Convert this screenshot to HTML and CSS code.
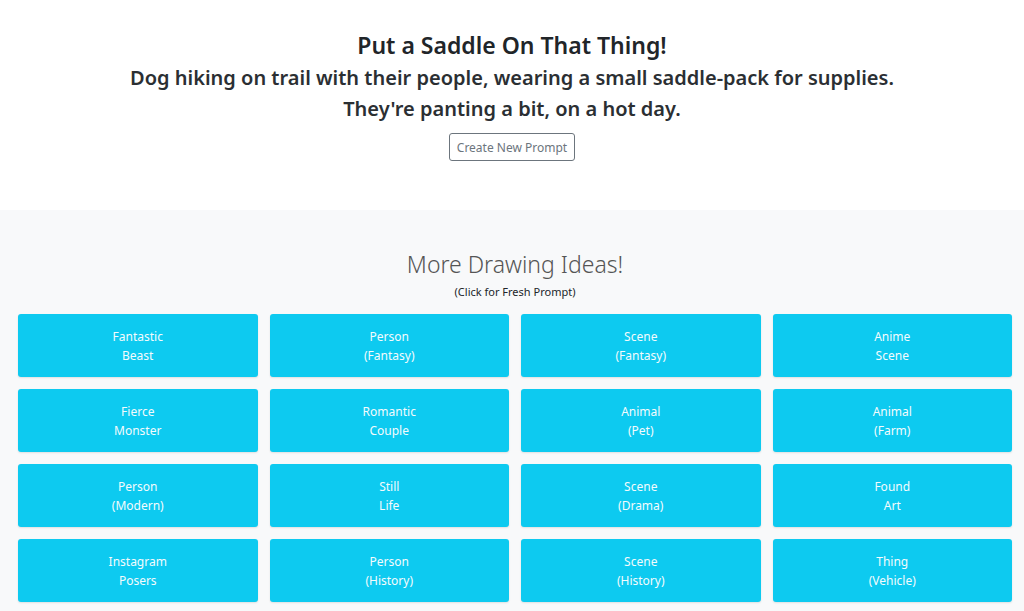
FILE: index.html
```html
<!DOCTYPE html>
<html>
<head>
	<title>Drawing Prompts</title>
	<link rel="stylesheet" href="styles.css">
</head>
<body>
	<div class="prompt">
		<h1>Put a Saddle On That Thing!</h1>
		<p class="desc">Dog hiking on trail with their people, wearing a small saddle-pack for supplies.<br>They're panting a bit, on a hot day.</p>
		<button class="btn-new">Create New Prompt</button>
	</div>

	<div class="ideas">
		<h2>More Drawing Ideas!</h2>
		<p class="hint">(Click for Fresh Prompt)</p>
		<div class="grid">
			<a class="card">Fantastic<br>Beast</a>
			<a class="card">Person<br>(Fantasy)</a>
			<a class="card">Scene<br>(Fantasy)</a>
			<a class="card">Anime<br>Scene</a>
			<a class="card">Fierce<br>Monster</a>
			<a class="card">Romantic<br>Couple</a>
			<a class="card">Animal<br>(Pet)</a>
			<a class="card">Animal<br>(Farm)</a>
			<a class="card">Person<br>(Modern)</a>
			<a class="card">Still<br>Life</a>
			<a class="card">Scene<br>(Drama)</a>
			<a class="card">Found<br>Art</a>
			<a class="card">Instagram<br>Posers</a>
			<a class="card">Person<br>(History)</a>
			<a class="card">Scene<br>(History)</a>
			<a class="card">Thing<br>(Vehicle)</a>
		</div>
	</div>
</body>
</html>
```

FILE: styles.css
```css
body{
	margin: 0;
	font-family: "Noto Sans", "Open Sans", sans-serif;
	color: #212529;
	background: #f8f9fa;
}
.prompt{
	background: #fff;
	text-align: center;
	padding-top: 28px;
	height: 210px;
	box-sizing: border-box;
}
.prompt h1{
	font-size: 23px;
	font-weight: 600;
	margin: 0;
	line-height: 34px;
}
.desc{
	font-size: 20px;
	font-weight: 600;
	line-height: 31px;
	margin: 0 0 9px;
	color: #2b2f33;
}
.btn-new{
	font-family: inherit;
	font-size: 12px;
	color: #6c757d;
	background: #fff;
	border: 1px solid #6c757d;
	border-radius: 3px;
	padding: 4px 7px;
	height: 28px;
}
.ideas{
	text-align: center;
	padding: 37px 12px 8px 18px;
}
.ideas h2{
	font-size: 23px;
	font-weight: 300;
	color: #555;
	margin: 0;
	line-height: 34px;
}
.hint{
	font-size: 11px;
	margin: 3px 0 15px;
}
.grid{
	display: grid;
	grid-template-columns: repeat(4, 1fr);
	gap: 12px;
}
.card{
	display: block;
	background: #0dcaf0;
	color: #f4fbfd;
	font-size: 12px;
	line-height: 19px;
	height: 63px;
	box-sizing: border-box;
	padding: 13px 0;
	border-radius: 3px;
	box-shadow: 0 1px 2px rgba(0,0,0,0.1);
}
```
